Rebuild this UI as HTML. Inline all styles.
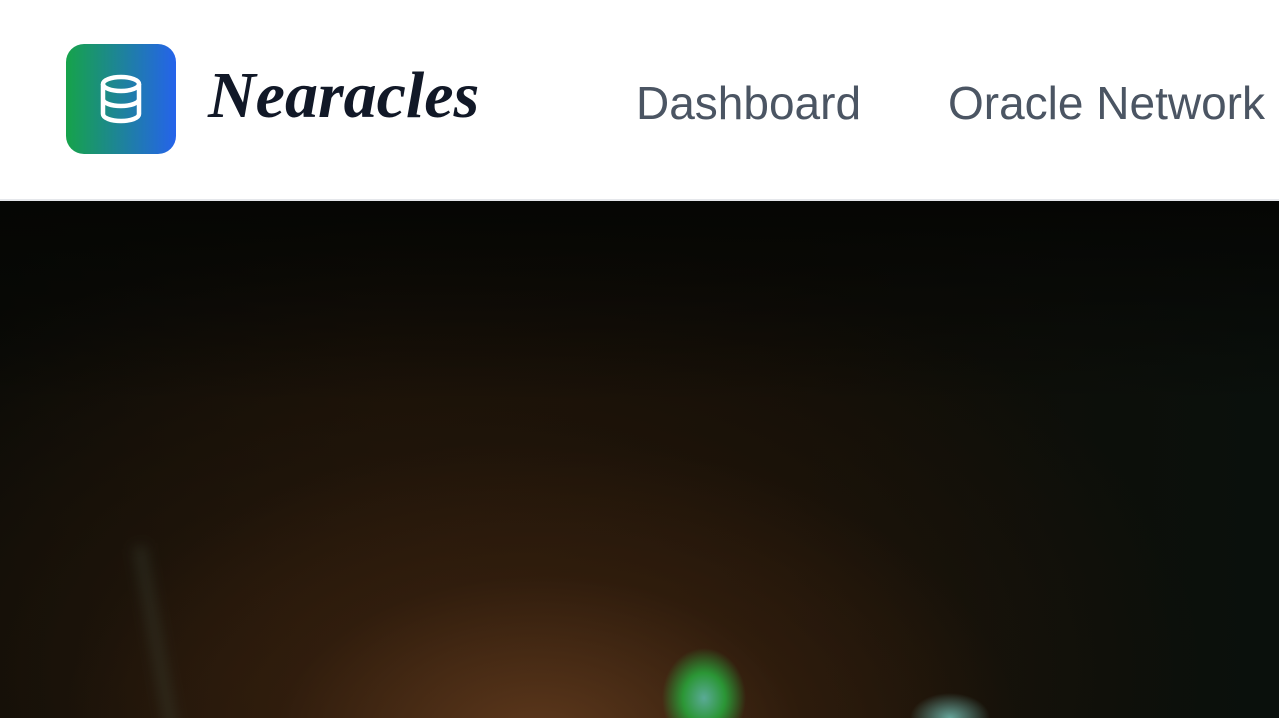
<!DOCTYPE html>
<html><head><meta charset="utf-8"><style>
html,body{margin:0;padding:0;width:1279px;height:718px;overflow:hidden;background:#fff;font-family:"Liberation Sans",sans-serif}
.hdr{position:absolute;left:0;top:0;width:1279px;height:199px;background:#fff;border-bottom:2px solid #e5e7eb}
.logo{position:absolute;left:66px;top:44px;width:110px;height:110px;border-radius:18px;background:linear-gradient(90deg,#16a34a,#2563eb)}
.name{position:absolute;left:208px;top:58px;font-family:"Liberation Serif",serif;font-style:italic;font-weight:bold;font-size:66px;color:#111827;letter-spacing:0px}
.nav{position:absolute;top:76px;font-size:46px;color:#4b5563}
.hero{position:absolute;left:0;top:201px;width:1279px;height:517px;overflow:hidden;
background:
radial-gradient(ellipse 42px 50px at 704px 497px,rgba(90,170,150,1),rgba(40,170,60,.85) 50%,transparent 100%),
radial-gradient(ellipse 40px 25px at 950px 517px,rgba(120,200,190,.8),transparent 100%),
radial-gradient(ellipse 480px 300px at 540px 540px,rgba(100,60,30,.9),rgba(55,32,14,.6) 55%,transparent 100%),
radial-gradient(ellipse 750px 450px at 450px 470px,#2a1a0c,transparent 100%),
linear-gradient(90deg,#090a06 0%,#140e06 30%,#110d06 60%,#0a100c 100%);}
.hero:before{content:"";position:absolute;left:0;top:0;right:0;height:200px;background:linear-gradient(#050604,transparent)}
.hero:after{content:"";position:absolute;left:-40px;top:360px;width:200px;height:300px;border-right:14px solid rgba(60,70,55,.35);border-radius:0 0 120px 0;filter:blur(6px);transform:rotate(-10deg)}
</style></head><body>
<div class="hdr">
<div class="logo"><svg width="110" height="110" viewBox="0 0 110 110"><g fill="none" stroke="#fff" stroke-width="4.5"><ellipse cx="55" cy="40" rx="18" ry="7"/><path d="M37 40v30c0 4 8 7 18 7s18-3 18-7V40M37 55c0 4 8 7 18 7s18-3 18-7"/></g></svg></div>
<div class="name">Nearacles</div>
<div class="nav" style="left:636px">Dashboard</div>
<div class="nav" style="left:948px">Oracle Network</div>
</div>
<div class="hero"></div>
</body></html>
